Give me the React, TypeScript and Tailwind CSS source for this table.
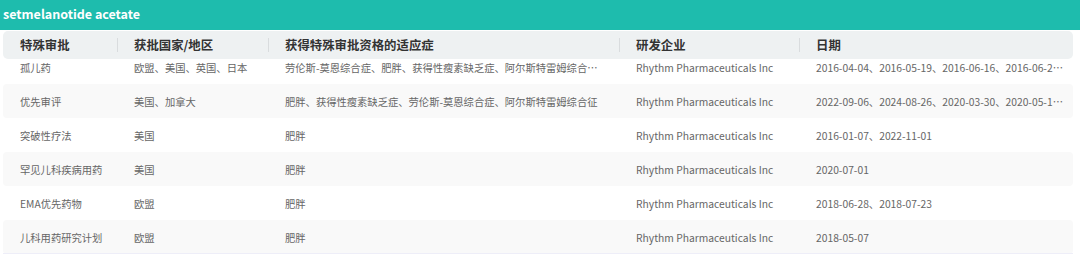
const cols = "grid grid-cols-[114px_151px_351px_180px_1fr]";

const rows = [
  ["孤儿药", "欧盟、美国、英国、日本", "劳伦斯-莫恩综合症、肥胖、获得性瘦素缺乏症、阿尔斯特雷姆综合征、普拉德-威利综合征", "Rhythm Pharmaceuticals Inc", "2016-04-04、2016-05-19、2016-06-16、2016-06-27、2017-01-01"],
  ["优先审评", "美国、加拿大", "肥胖、获得性瘦素缺乏症、劳伦斯-莫恩综合症、阿尔斯特雷姆综合征", "Rhythm Pharmaceuticals Inc", "2022-09-06、2024-08-26、2020-03-30、2020-05-12、2020-11-25"],
  ["突破性疗法", "美国", "肥胖", "Rhythm Pharmaceuticals Inc", "2016-01-07、2022-11-01"],
  ["罕见儿科疾病用药", "美国", "肥胖", "Rhythm Pharmaceuticals Inc", "2020-07-01"],
  ["EMA优先药物", "欧盟", "肥胖", "Rhythm Pharmaceuticals Inc", "2018-06-28、2018-07-23"],
  ["儿科用药研究计划", "欧盟", "肥胖", "Rhythm Pharmaceuticals Inc", "2018-05-07"],
];

const heads = ["特殊审批", "获批国家/地区", "获得特殊审批资格的适应症", "研发企业", "日期"];

export default function App() {
  return (
    <div
      className="w-[1080px] h-[262px] bg-white overflow-hidden"
      style={{ fontFamily: '"Noto Sans CJK SC", "Noto Sans", sans-serif' }}
    >
      <div className="h-[30px] bg-[#1ebcad] px-[3px] flex items-center">
        <h1 className="text-white font-bold text-[12.5px] leading-none -mt-[2px]">setmelanotide acetate</h1>
      </div>
      <div className="mx-[3px] mt-[1px] w-[1070px]">
        <div className={`${cols} h-[28px] bg-[#eef1f2] rounded-[5px] text-[12.4px] font-bold text-[#333]`}>
          {heads.map((h, i) => (
            <div key={h} className="flex items-center">
              {i > 0 && <span className="h-[14px] w-px bg-[#d9dcde] mr-[16px]" />}
              <span className={i === 0 ? "pl-[17px]" : ""}>{h}</span>
            </div>
          ))}
        </div>
        {rows.map((r, ri) => (
          <div
            key={ri}
            className={`${cols} text-[10.3px] text-[#666] rounded-[4px] ${
              ri === 0 ? "h-[25px] items-start" : "h-[34px] items-center"
            } ${ri % 2 === 1 ? "bg-[#f9f9f9]" : "bg-white"}`}
          >
            {r.map((c, ci) => (
              <div
                key={ci}
                className={`truncate leading-[17px] pl-[17px] ${
                  ci === 2 ? "pr-[19px]" : ci === 4 ? "pr-[8px]" : "pr-2"
                }`}
              >
                {c}
              </div>
            ))}
          </div>
        ))}
        <div className="h-px bg-[#eeeef8] mt-[-1px]" />
      </div>
    </div>
  );
}
